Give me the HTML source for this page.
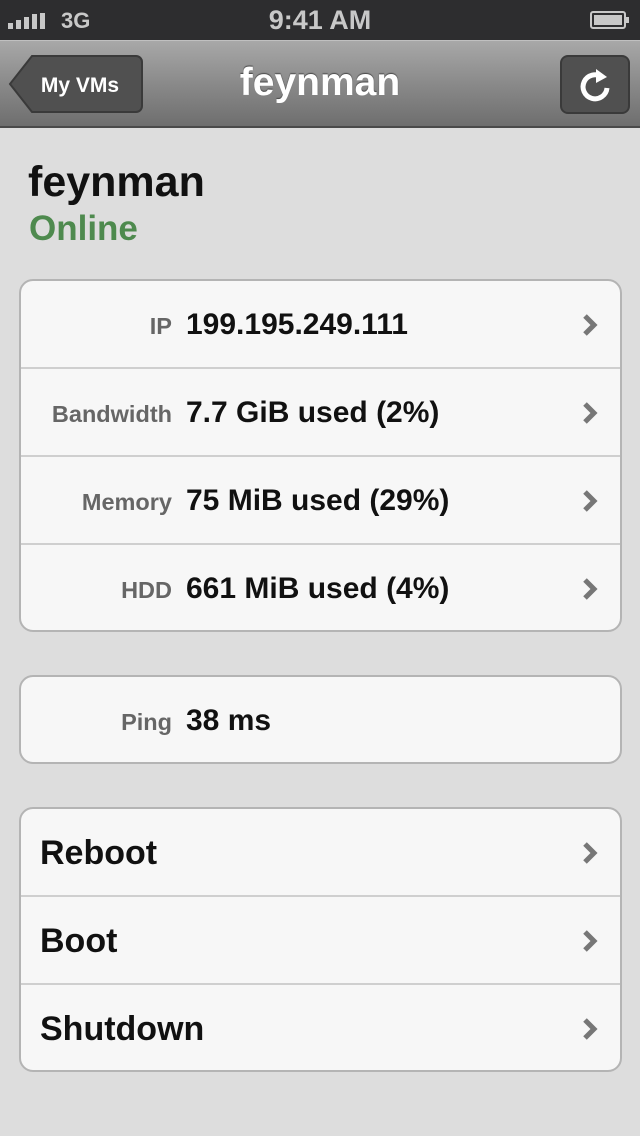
<!DOCTYPE html>
<html><head><style>
*{margin:0;padding:0;box-sizing:border-box}
body{width:640px;height:1136px;background:#dddddd;font-family:"Liberation Sans",Arial,sans-serif;position:relative;overflow:hidden}
.status{position:absolute;top:0;left:0;width:640px;height:40px;background:#2d2d2f;color:#c8c8c8;font-weight:bold}
.nav{position:absolute;top:40px;left:0;width:640px;height:88px;background:linear-gradient(#a8a8a8,#8a8a8a 50%,#6e6e6e);border-top:1px solid #c0c0c0;border-bottom:2px solid #4a4a4a}
.nav h1{position:absolute;left:0;width:640px;top:20px;text-align:center;color:#fff;font-size:39px;text-shadow:0 -1px 1px #444}
.group{position:absolute;left:19px;width:603px;background:#f7f7f7;border:2px solid #b4b4b4;border-radius:14px;overflow:hidden}
.row{height:88px;border-bottom:2px solid #cfcfcf;position:relative}
.row:last-child{border-bottom:none}
.lab{position:absolute;right:448px;top:32px;font-size:23.5px;font-weight:bold;color:#666;text-align:right;white-space:nowrap}
.val{position:absolute;left:165px;top:27px;font-size:30px;font-weight:bold;color:#111;white-space:nowrap}
.act{position:absolute;left:19px;top:25px;font-size:34px;font-weight:bold;color:#111}
.chev{position:absolute;right:22px;top:32px}
</style></head><body>
<div class="status">
<svg style="position:absolute;left:8px;top:13px" width="38" height="16"><rect x="0" y="10" width="5" height="6" fill="#c8c8c8"/><rect x="8" y="7" width="5" height="9" fill="#c8c8c8"/><rect x="16" y="4" width="5" height="12" fill="#c8c8c8"/><rect x="24" y="1" width="5" height="15" fill="#c8c8c8"/><rect x="32" y="0" width="5" height="16" fill="#c8c8c8"/></svg>
<div style="position:absolute;left:61px;top:8px;font-size:22px">3G</div>
<div style="position:absolute;left:0;width:640px;text-align:center;top:5px;font-size:27px">9:41 AM</div>
<svg style="position:absolute;left:590px;top:11px" width="40" height="18"><rect x="1" y="1" width="34" height="16" rx="2" fill="none" stroke="#c8c8c8" stroke-width="2"/><rect x="4" y="4" width="28" height="10" fill="#c8c8c8"/><rect x="36" y="6" width="3" height="6" fill="#c8c8c8"/></svg>
</div>
<div class="nav">
<svg style="position:absolute;left:8px;top:14px" width="136" height="60"><path d="M24 1H128a6 6 0 0 1 6 6V51a6 6 0 0 1-6 6H24L2 29Z" fill="#505050" stroke="#3a3a3a" stroke-width="2"/><text x="72" y="37" text-anchor="middle" fill="#fff" font-family="Liberation Sans" font-weight="bold" font-size="21">My VMs</text></svg>
<svg style="position:absolute;left:560px;top:14px" width="72" height="60"><rect x="1" y="1" width="68" height="57" rx="7" fill="#505050" stroke="#3a3a3a" stroke-width="2"/><path d="M42 22A12 12 0 1 0 47 33" fill="none" stroke="#fff" stroke-width="5"/><path d="M36 14L47 22L36 28Z" fill="#fff"/></svg>
<h1>feynman</h1>
</div>
<div style="position:absolute;left:28px;top:158px;font-size:43px;font-weight:bold;color:#111">feynman</div>
<div style="position:absolute;left:29px;top:209px;font-size:35px;font-weight:bold;color:#4e8a4e">Online</div>

<div class="group" style="top:279px;height:353px">
<div class="row"><span class="lab">IP</span><span class="val">199.195.249.111</span><svg class="chev" width="16" height="24"><path d="M3 3L12 12L3 21" fill="none" stroke="#777" stroke-width="5"/></svg></div>
<div class="row"><span class="lab">Bandwidth</span><span class="val">7.7 GiB used (2%)</span><svg class="chev" width="16" height="24"><path d="M3 3L12 12L3 21" fill="none" stroke="#777" stroke-width="5"/></svg></div>
<div class="row"><span class="lab">Memory</span><span class="val">75 MiB used (29%)</span><svg class="chev" width="16" height="24"><path d="M3 3L12 12L3 21" fill="none" stroke="#777" stroke-width="5"/></svg></div>
<div class="row"><span class="lab">HDD</span><span class="val">661 MiB used (4%)</span><svg class="chev" width="16" height="24"><path d="M3 3L12 12L3 21" fill="none" stroke="#777" stroke-width="5"/></svg></div>
</div>

<div class="group" style="top:675px;height:89px">
<div class="row"><span class="lab">Ping</span><span class="val">38 ms</span></div>
</div>

<div class="group" style="top:807px;height:265px">
<div class="row"><span class="act">Reboot</span><svg class="chev" width="16" height="24"><path d="M3 3L12 12L3 21" fill="none" stroke="#777" stroke-width="5"/></svg></div>
<div class="row"><span class="act">Boot</span><svg class="chev" width="16" height="24"><path d="M3 3L12 12L3 21" fill="none" stroke="#777" stroke-width="5"/></svg></div>
<div class="row"><span class="act">Shutdown</span><svg class="chev" width="16" height="24"><path d="M3 3L12 12L3 21" fill="none" stroke="#777" stroke-width="5"/></svg></div>
</div>
</body></html>
